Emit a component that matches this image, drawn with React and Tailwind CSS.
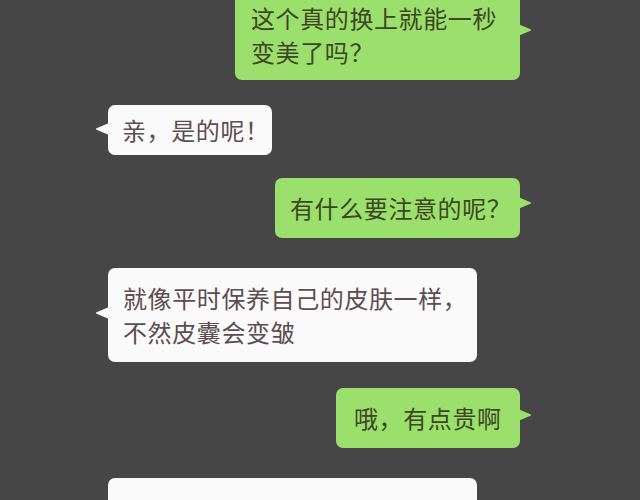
const Tail = ({ side, color, top }) => (
  <svg
    className={side === 'left' ? 'absolute -left-[13px]' : 'absolute -right-[12px]'}
    style={{ top }}
    width="14"
    height="14"
    viewBox="0 0 14 14"
  >
    {side === 'left' ? (
      <path d="M14 1 L1.5 6.2 Q0 7 1.5 7.8 L14 13 Z" fill={color} />
    ) : (
      <path d="M0 1 L12.5 6.2 Q14 7 12.5 7.8 L0 13 Z" fill={color} />
    )}
  </svg>
)

const Bubble = ({ side, className, tailTop, children }) => {
  const green = side === 'right'
  return (
    <div
      className={`relative shrink-0 whitespace-nowrap rounded-[7px] text-[24px] leading-[34px] tracking-[0.6px] ${
        green ? 'self-end mr-[120px] bg-[#9be06c] text-[#3d4622]' : 'self-start ml-[108px] bg-[#fbfafa] text-[#5c4d50]'
      } ${className}`}
    >
      <Tail side={side} color={green ? '#9be06c' : '#fbfafa'} top={tailTop} />
      {children}
    </div>
  )
}

export default function App() {
  return (
    <div className="h-[500px] w-[640px] overflow-hidden bg-[#464646] font-['Noto_Sans_CJK_SC','Noto_Sans',sans-serif]">
      <div className="flex flex-col">
        <Bubble side="right" tailTop={33} className="-mt-[10px] w-[285px] px-[16px] py-[11px]">
          <p>这个真的换上就能一秒</p>
          <p>变美了吗？</p>
        </Bubble>

        <Bubble side="left" tailTop={17} className="mt-[25px] w-[164px] px-[14px] py-[8px]">
          <p>亲，是的呢！</p>
        </Bubble>

        <Bubble side="right" tailTop={18} className="mt-[23px] w-[245px] px-[15px] py-[13px]">
          <p>有什么要注意的呢？</p>
        </Bubble>

        <Bubble side="left" tailTop={38} className="mt-[30px] w-[369px] px-[15px] py-[13px]">
          <p>就像平时保养自己的皮肤一样，</p>
          <p>不然皮囊会变皱</p>
        </Bubble>

        <Bubble side="right" tailTop={20} className="mt-[26px] w-[184px] px-[18px] py-[13px]">
          <p>哦，有点贵啊</p>
        </Bubble>

        <Bubble side="left" tailTop={38} className="mt-[30px] w-[369px] px-[15px] py-[16px]">
          <p>是的，所以要定期做好保养，</p>
          <p>才能一直美美的哦</p>
        </Bubble>
      </div>
    </div>
  )
}
